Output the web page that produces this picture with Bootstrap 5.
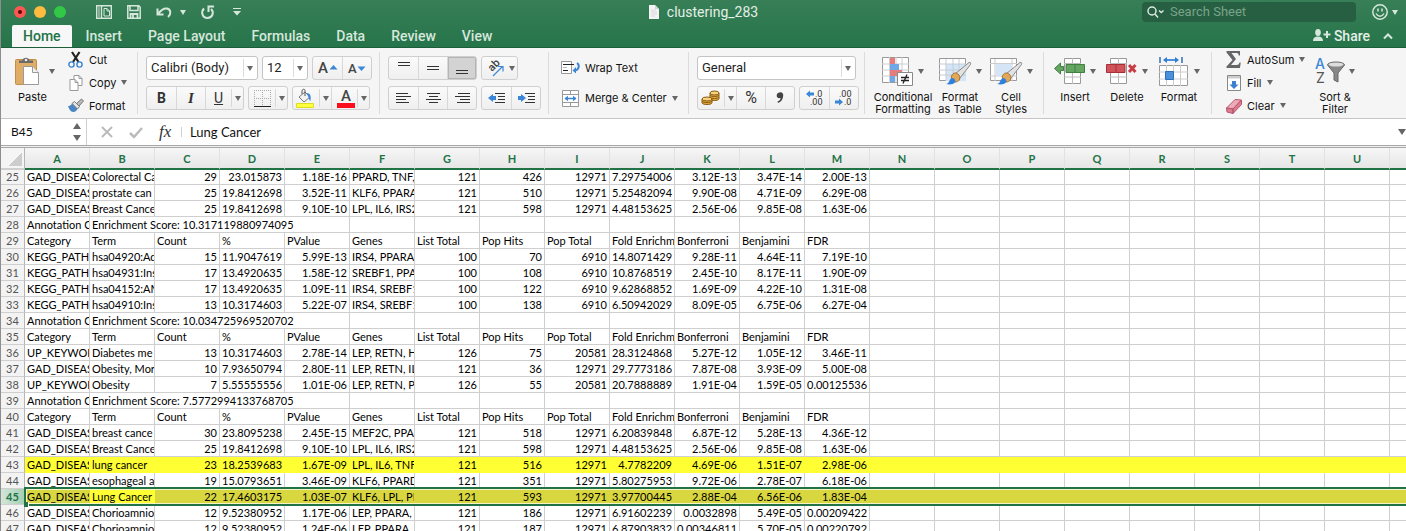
<!DOCTYPE html>
<html lang="en">
<head>
<meta charset="utf-8">
<meta name="viewport" content="width=device-width, initial-scale=1">
<title>clustering_283</title>
<link href="https://cdn.jsdelivr.net/npm/bootstrap@5.3.0/dist/css/bootstrap.min.css" rel="stylesheet">
<style>
  :root { --ui: Roboto, "Liberation Sans", sans-serif; --label: Inter, Roboto, sans-serif; --cell: Lato, "Liberation Sans", sans-serif; --xl: #217346; }
  body { font-family: var(--ui); font-size: 12px; line-height: 14px; color: #111; height: 100vh; overflow: hidden; }
  .app-window { height: 100vh; overflow: hidden; border-left: 1px solid #8d8d8d; }
  button { border: 0; background: none; padding: 0; color: inherit; font: inherit; }
  svg { display: block; flex: none; overflow: visible; }

  /* green title area */
  .app-head { background: linear-gradient(#387f57, #26744a); border-bottom: 1px solid #1b5f3a; color: #e4efe8; }
  .title-row { display: grid; grid-template-columns: 1fr auto 1fr; height: 24px; align-items: center; }
  .lights { padding-left: 13px; margin-right: 30px; }
  .light { width: 12px; height: 12px; border-radius: 50%; }
  .quick { gap: 15px; }
  .doc-title { font-size: 14px; }
  .find-box { width: 214px; height: 20px; background: #265f41; border-radius: 4px; }
  .find-box input { background: none; border: 0; outline: 0; color: #fff; font-size: 13px; width: 150px; padding: 0; line-height: 16px; }
  .find-box input::placeholder { color: #7ba38c; opacity: 1; }
  .tabs-row { height: 23px; padding-left: 11px; }
  .tab-btn { font-size: 14px; font-weight: 500; padding: 0 13px; height: 22px; color: #d6e7dc; }
  .tab-btn.active { background: #f7f7f7; color: var(--xl); border-radius: 2px 2px 0 0; padding: 0 11px; margin-right: 1px; }
  .share-box { gap: 13px; padding-right: 13px; }
  .share-btn { font-size: 14px; font-weight: 500; }

  .tri { width: 0; height: 0; border: 3px solid transparent; border-top: 5px solid #666; border-bottom: 0; flex: none; }
  .tri.pale { border-top-color: #d6e7dc; }
  .tri.big { border-width: 6px 4px 0; }
  .tri.big.up { border: solid transparent; border-width: 0 4px 6px; border-bottom-color: #666; }

  /* ribbon */
  .ribbon { background: #f5f5f5; height: 70px; }
  .ribbon .vr { margin: 4px 0; background: #dcdcdc; opacity: 1; flex: none; width: 1px; min-height: 0; }
  .grp { flex: none; height: 70px; }
  .g-clip { width: 136px; } .g-font { width: 241px; } .g-align { width: 168px; } .g-wrap { width: 139px; }
  .g-num { width: 175px; } .g-style { width: 178px; padding-left: 9px; } .g-cells { width: 167px; padding-left: 5px; } .g-edit { padding-left: 14px; }
  .stack { padding: 8px 0 0 8px; display: flex; flex-direction: column; gap: 6px; }
  .g-wrap.stack { padding-left: 12px; }
  .rowline { display: flex; gap: 4px; }
  .seg { display: flex; height: 24px; border: 1px solid #cfcfcf; border-radius: 3px; background: linear-gradient(#fafafa, #efefef); color: #333; }
  .seg > button { width: 29px; display: flex; align-items: center; justify-content: center; }
  .seg > button + button { border-left: 1px solid #d8d8d8; }
  .seg > button.wide { width: 38px; padding: 0 2px 0 5px; justify-content: space-between; }
  .seg > button.on { background: #d3d3d3; box-shadow: inset 0 0 0 1px #b4b4b4; border-radius: 0 2px 2px 0; }
  .seg .cut { border-left: 1px solid #d8d8d8; align-self: stretch; margin: 2px 0; padding-left: 3px; display: flex; align-items: center; }
  .pick { height: 24px; border: 1px solid #c4c4c4; border-radius: 3px; font-size: 13px; line-height: 16px; padding: 0 0 0 4px; color: #222; appearance: none;
    background: #fff url("data:image/svg+xml,%3Csvg xmlns='http://www.w3.org/2000/svg' width='14' height='18'%3E%3Cpath d='M.5 0v18' stroke='%23dcdcdc'/%3E%3Cpath d='M4 7h6l-3 5z' fill='%23666'/%3E%3C/svg%3E") no-repeat right center; }
  .side-btn { height: 23px; display: flex; align-items: center; gap: 5px; white-space: nowrap; font: 11px/14px var(--label); }
  .side-btn svg { width: 16px; }
  .g-wrap .side-btn { height: 24px; }
  .g-wrap .side-btn svg { width: 19px; }
  .big-btn { display: flex; flex-direction: column; align-items: center; font: 11px/12px var(--label); padding-top: 7px; }
  .pic { display: flex; height: 32px; align-items: center; gap: 5px; margin-bottom: 4px; }

  /* formula bar */
  .fbar { height: 27px; border-top: 1px solid #c6c6c6; background: #fff; font-family: var(--cell); }
  .fbar input { border: 0; outline: 0; padding: 0; font: 13px/16px var(--cell); color: #111; }
  .fbar input.name-in { width: 62px; margin-left: 10px; font-size: 12px; }
  .fbar .vr { background: #cfcfcf; opacity: 1; min-height: 0; }
  .steps { gap: 6px; margin-right: 5px; }
  .f-acts { gap: 16px; margin-left: 14px; }
  .fx-mark { font: italic 17px/20px "Liberation Serif", serif; width: 22px; color: #333; }
  .split { height: 3px; border-top: 1px solid #a9a7a9; border-bottom: 1px solid #a9a7a9; background: #efefef; }

  /* sheet */
  .sheet { table-layout: fixed; border-collapse: separate; border-spacing: 0; width: 1454px; font: 11px/15px var(--cell); color: #000; }
  .sheet col { width: 65px; } .sheet col:first-child { width: 24px; }
  .sheet th, .sheet td { height: 16px; padding: 0 2px; border-right: 1px solid #cfcfcf; border-bottom: 1px solid #cfcfcf; overflow: hidden; white-space: nowrap; background: #fff; }
  .sheet td.n { text-align: right; }
  .sheet thead th { height: 22px; line-height: 19px; background: linear-gradient(#f6f6f6, #e6e6e6); border-bottom: 2px solid var(--xl); border-right-color: #e2e2e2; color: var(--xl); text-align: center; font-weight: 700; }
  .sheet thead th:first-child { background: linear-gradient(135deg, transparent 50%, #cdcdcd 50%) 7px 5px / 14px 13px no-repeat #f5f5f5; border-bottom: 2px solid #cfcfcf; border-right-color: #b5b5b5; }
  .sheet tbody th { background: #f3f3f3; color: #555; font-weight: 400; text-align: center; border-right-color: #b5b5b5; }
  .sheet tbody tr:first-child th, .sheet tbody tr:first-child td { height: 15px; line-height: 14px; }
  .sheet .hot td { background: #ffff33; border-color: #ffff33; }
  .sheet .picked td { background: #d9d740; border-color: #d9d740; }
  .sheet .picked td.cur { background: #ffff33; border-color: #ffff33; }
  .sheet .picked th { background: linear-gradient(90deg, #d3e6da, #a5cfb3); color: var(--xl); font-weight: 700; position: relative; overflow: visible; }
  .sheet .picked th::after { content: ""; position: absolute; left: 100%; width: 100vw; top: -2px; bottom: -2px; border: 2px solid var(--xl); box-shadow: inset 0 0 0 1px #f4f4c8; }
  .sheet .picked th::before { content: ""; position: absolute; left: 100%; bottom: -3px; width: 5px; height: 5px; background: var(--xl); border-right: 1px solid #fff; z-index: 1; }
</style>
</head>
<body>
<div class="app-window">
  <header class="app-head">
    <div class="title-row">
      <div class="d-flex align-items-center">
        <div class="d-flex gap-2 lights">
          <span class="light" style="background:#fc5753"><svg width="12" height="12"><circle cx="6" cy="6" r="2" fill="#5a0805"/></svg></span>
          <span class="light" style="background:#fdbc40"></span>
          <span class="light" style="background:#33c748"></span>
        </div>
        <div class="d-flex align-items-center quick">
        <button aria-label="Sidebar"><svg width="16" height="14" viewBox="0 0 16 14" fill="none" stroke="#d6e7dc"><path d="M.7.7h14.600v12.600H.7zM5.500 1v12" stroke-width="1.400"/><path d="M2 3h2M2 5h2M2 7h2M2 9h2M2 11h2"/><path d="M8 3.500h3l2.500 2.500v5H8zM11 3.500V6h2.500"/></svg></button>
        <button aria-label="Save"><svg width="14" height="14" viewBox="0 0 14 14" fill="none" stroke="#d6e7dc" stroke-width="1.500"><path d="M.8.8h11l1.400 1.400v11H.8zM3 1v4.500h8V1"/><path d="M3.500 13V9h7v4M6 10v3" stroke-width="1.800"/></svg></button>
        <button class="d-flex align-items-center gap-2" aria-label="Undo"><svg width="16" height="13" viewBox="0 0 16 13" fill="none" stroke="#d6e7dc" stroke-width="2"><path d="M1.500 2.500v6h6M2 8C5 4 8 2 11 2.500c4 1 4.500 5.500 1 8.500"/></svg><span class="tri pale"></span></button>
        <button aria-label="Redo"><svg width="13" height="14" viewBox="0 0 13 14" fill="none" stroke="#d6e7dc" stroke-width="2"><path d="M3 3.500C-.5 7 1.500 13 6.500 13S13.500 7 10 4M7.500 7V1.500H13"/></svg></button>
        <button class="ms-1" aria-label="Customize toolbar"><svg width="8" height="8" fill="#d6e7dc"><path d="M0 0h8v1H0zM0 3h8L4 7.500z"/></svg></button>
        </div>
      </div>
      <div class="d-flex align-items-center gap-2 doc-title">
        <svg width="10" height="14" viewBox="0 0 10 14"><path d="M0 0h6l4 4v10H0z" fill="#f4f4f4"/><path d="M6 0v4h4z" fill="#c9d6ce"/><path d="M2 5h5M2 7h6M2 9h6M2 11h4" stroke="#d8d8d8"/></svg>clustering_283
      </div>
      <div class="d-flex align-items-center justify-content-end gap-3 pe-2">
        <label class="find-box d-flex align-items-center"><svg class="mx-1" width="20" height="12" viewBox="0 0 20 12" fill="none" stroke="#dbe8e0" stroke-width="1.500"><circle cx="6" cy="5" r="4"/><path d="M9 8l3 3.500M13 4.500l2.200 2L17.500 4.500"/></svg><input type="text" placeholder="Search Sheet" aria-label="Search Sheet"></label>
        <button class="d-flex align-items-center gap-1" aria-label="Feedback"><svg width="16" height="16" fill="none" stroke="#d6e7dc" stroke-width="1.500"><circle cx="8" cy="8" r="7.200"/><path d="M6 4.500v3M10 4.500v3M4 9.500c2 3.500 6 3.500 8 0"/></svg><span class="tri pale"></span></button>
      </div>
    </div>
    <nav class="tabs-row d-flex align-items-end" aria-label="Ribbon tabs">
      <button class="tab-btn active">Home</button><button class="tab-btn">Insert</button><button class="tab-btn">Page Layout</button><button class="tab-btn">Formulas</button><button class="tab-btn">Data</button><button class="tab-btn">Review</button><button class="tab-btn">View</button>
      <div class="ms-auto d-flex align-items-center align-self-center share-box">
        <button class="share-btn d-flex align-items-center gap-1"><svg width="17" height="13" viewBox="0 0 17 13" fill="#d6e7dc"><ellipse cx="5" cy="3.500" rx="2.800" ry="3.500"/><path d="M0 12c0-3 1.500-4.500 5-4.500S10 9 10 12z"/><path d="M13 2h2v2.500h2.500v2H15V9h-2V6.500h-2.500v-2H13z"/></svg>Share</button>
        <button aria-label="Collapse ribbon"><svg width="10" height="6" fill="none" stroke="#d6e7dc" stroke-width="2"><path d="M1 5.500l4-4 4 4"/></svg></button>
      </div>
    </nav>
  </header>

  <div class="ribbon d-flex">
    <div class="grp g-clip d-flex">
      <button class="big-btn" style="width:63px"><span class="pic ps-1"><svg width="25" height="30" viewBox="0 0 25 30"><rect x=".5" y="3.500" width="21" height="25" rx="1" fill="#e0ad68" stroke="#c48f49"/><path d="M4 7V4.500h3.500C7.500 1 14 .5 14.500 4.500H18V7z" fill="#6b6b6b"/><circle cx="11" cy="4" r="1.300" fill="#eee"/><path d="M8.500 10.500h9l6 6v12h-15z" fill="#fff" stroke="#9a9a9a"/><path d="M17.500 10.500v6h6" fill="#f2f2f2" stroke="#9a9a9a"/></svg><span class="tri ms-1"></span></span>Paste</button>
      <div class="ms-1 d-flex flex-column">
        <button class="side-btn"><svg width="16" height="16" viewBox="0 0 16 16" fill="none"><path d="M4 0l6.500 10M11.500 0L5 10" stroke="#222" stroke-width="2.200"/><circle cx="3.500" cy="12.500" r="2.600" stroke="#3a82d0" stroke-width="1.400"/><circle cx="11.500" cy="12.500" r="2.600" stroke="#3a82d0" stroke-width="1.400"/></svg>Cut</button>
        <button class="side-btn"><svg width="15" height="16" viewBox="0 0 15 16" fill="#fff" stroke="#999"><path d="M5.500.5h5l3 3v7h-8z"/><path d="M1.500 4.500h5l3 3v8h-8z"/><path d="M6.500 4.500v3h3M10.500.5v3h3" fill="none"/></svg>Copy<span class="tri"></span></button>
        <button class="side-btn"><svg width="16" height="14" viewBox="0 0 16 14"><path d="M0 7c3 0 3-2 5-3l5 5c-1 2-2 4-5 4-2 0-4-3-5-6z" fill="#4a86c5"/><path d="M4 4.500l2.500-2 5 5-2 2.500z" fill="#e5e5e5" stroke="#777"/><path d="M8.500 4.500L13.500 0l2 2-4.500 5z" fill="#bbb" stroke="#777"/></svg>Format</button>
      </div>
    </div>
    <div class="vr"></div>

    <div class="grp g-font stack">
      <div class="rowline">
        <select class="pick" style="width:112px" aria-label="Font"><option>Calibri (Body)</option></select>
        <select class="pick" style="width:46px" aria-label="Font size"><option>12</option></select>
        <div class="seg"><button aria-label="Grow font"><svg width="20" height="14"><text x="0" y="12" font-size="15" font-weight="500" fill="#444">A</text><path d="M11.500 8.500h8L15.500 4z" fill="#3b86d6"/></svg></button><button aria-label="Shrink font"><svg width="18" height="14"><text x="0" y="12" font-size="13" font-weight="500" fill="#444">A</text><path d="M9.500 5.500h8l-4 4.500z" fill="#3b86d6"/></svg></button></div>
      </div>
      <div class="rowline">
        <div class="seg"><button class="fw-bold" style="font-size:14px">B</button><button style="font:italic bold 15px 'Liberation Serif',serif">I</button><button class="wide ps-2" aria-label="Underline"><u style="font-size:14px">U</u><span class="cut"><span class="tri"></span></span></button></div>
        <div class="seg"><button class="wide" aria-label="Borders"><svg width="17" height="17" fill="none" stroke="#aaa"><path d="M.5 0v16M8.500 0v16M16.500 0v16M0 .5h17M0 8.500h17" stroke-dasharray="1 1"/><path d="M0 16.500h17" stroke="#222"/></svg><span class="cut"><span class="tri"></span></span></button></div>
        <div class="seg"><button class="wide" style="padding-left:3px" aria-label="Fill colour"><svg width="18" height="19"><path d="M3 8l6-5 5 5-6 5z" fill="#f2f2f2" stroke="#777"/><path d="M9 7V1.500C9-.5 6 0 6 2v3" fill="none" stroke="#555"/><path d="M10 4c5 0 5 3 4.500 8-2-1-1-4-4.500-8z" fill="#3b86d6"/><path d="M.5 14.500h17v4H.5z" fill="#ffff3c" stroke="#dede20"/></svg><span class="cut"><span class="tri"></span></span></button><button class="wide" aria-label="Font colour"><svg width="18" height="19"><text x="4" y="12" font-size="15" font-weight="500" fill="#444">A</text><path d="M0 14h18v5H0z" fill="#fc0d1b"/></svg><span class="cut"><span class="tri"></span></span></button></div>
      </div>
    </div>
    <div class="vr"></div>

    <div class="grp g-align stack">
      <div class="rowline">
        <div class="seg"><button aria-label="Align top"><svg width="12" height="16" stroke="#333"><path d="M0 2.500h12M0 5.500h12"/></svg></button><button aria-label="Align middle"><svg width="12" height="16" stroke="#333"><path d="M0 6.500h12M0 9.500h12"/></svg></button><button class="on" aria-label="Align bottom"><svg width="12" height="16" stroke="#333"><path d="M0 10.500h12M0 13.500h12"/></svg></button></div>
        <div class="seg"><button class="wide" style="width:35px" aria-label="Orientation"><svg width="18" height="18"><text transform="translate(5 13) rotate(-45)" font-size="11" font-weight="500" fill="#444">ab</text><path d="M6 17l9-9M11 7.500h5v5" fill="none" stroke="#3b86d6" stroke-width="1.200"/></svg><span class="tri"></span></button></div>
      </div>
      <div class="rowline">
        <div class="seg"><button aria-label="Align left"><svg width="15" height="12" stroke="#333"><path d="M0 1.500h12M0 4.500h15M0 7.500h10M0 10.500h13"/></svg></button><button aria-label="Centre"><svg width="15" height="12" stroke="#333"><path d="M1 1.500h13M3 4.500h9M0 7.500h15M3 10.500h9"/></svg></button><button aria-label="Align right"><svg width="15" height="12" stroke="#333"><path d="M3 1.500h12M0 4.500h15M5 7.500h10M2 10.500h13"/></svg></button></div>
        <div class="seg"><button aria-label="Decrease indent"><svg width="17" height="12" stroke="#333"><path d="M7 1.500h10M10 4.500h7M10 7.500h7M7 10.500h10"/><path d="M0 6l5-4v2h3v4H5v2z" fill="#3b86d6" stroke="none"/></svg></button><button aria-label="Increase indent"><svg width="17" height="12" stroke="#333"><path d="M7 1.500h10M10 4.500h7M10 7.500h7M7 10.500h10"/><path d="M8 6L3 2v2H0v4h3v2z" fill="#3b86d6" stroke="none"/></svg></button></div>
      </div>
    </div>
    <div class="vr"></div>

    <div class="grp g-wrap stack">
      <button class="side-btn"><svg height="14" viewBox="0 0 19 14" fill="none"><path d="M.5.5h10v12H.5z" fill="#fff" stroke="#999"/><path d="M2 6.500h4" stroke="#bbb"/><path d="M2 3.500h11M2 9.500h5" stroke="#222"/><path d="M16 2c3 2 2 7-2 7.500" stroke="#3b86d6" stroke-width="2"/><path d="M11.500 9.500L15 6v6.500z" fill="#3b86d6"/></svg>Wrap Text</button>
      <button class="side-btn"><svg height="17" viewBox="0 0 19 17" fill="#fff" stroke="#999"><path d="M1.500.500h16v16h-16z"/><path d="M1.500 4.500h16M1.500 12.500h16M9.500.5v4M9.500 12.500v4"/><path d="M4 8.500h11" stroke="#3b86d6" stroke-width="1.500"/><path d="M3.500 8.500L7 5.800v5.400zM15.500 8.500L12 5.800v5.400z" fill="#3b86d6" stroke="none"/></svg>Merge &amp; Center<span class="tri"></span></button>
    </div>
    <div class="vr"></div>

    <div class="grp g-num stack">
      <div class="rowline"><select class="pick" style="width:159px" aria-label="Number format"><option>General</option></select></div>
      <div class="rowline">
        <div class="seg"><button class="wide" style="padding-left:3px" aria-label="Currency"><svg width="19" height="16" viewBox="0 0 19 16" fill="#e3ab3c" stroke="#8a5a14"><path d="M9 3v6c1 2 8 2 9 0V3z"/><ellipse cx="13.500" cy="3" rx="4.500" ry="2" fill="#f6d37a"/><path d="M9 5c1 2 8 2 9 0M9 7c1 2 8 2 9 0" fill="none"/><path d="M1 9v4c1 2 9 2 10 0V9z"/><ellipse cx="6" cy="9" rx="5" ry="2" fill="#f6d37a"/><path d="M1 11c1 2 9 2 10 0" fill="none"/></svg><span class="cut"><span class="tri"></span></span></button><button style="font-size:16px">%</button><button aria-label="Comma style"><svg width="8" height="12"><path d="M2 1c4-2 6 1 5 4-.5 3-2 5-5 6l-.5-1.500C4 8.500 4.500 7.500 4.500 6 0 7 0 2 2 1z" fill="#444"/></svg></button></div>
        <div class="seg"><button aria-label="Increase decimal"><svg width="18" height="17" font-size="9" fill="#333"><text x="9" y="7">.0</text><text x="4" y="15">.00</text><path d="M0 4l4-3.500v2h4v3H4v2z" fill="#3b86d6"/></svg></button><button aria-label="Decrease decimal"><svg width="18" height="17" font-size="9" fill="#333"><text x="4" y="7">.00</text><text x="9" y="15">.0</text><path d="M8 12L4 8.500v2H0v3h4v2z" fill="#3b86d6"/></svg></button></div>
      </div>
    </div>
    <div class="vr"></div>

    <div class="grp g-style d-flex">
      <button class="big-btn" style="width:58px"><span class="pic"><svg width="31" height="29" viewBox="0 0 31 29"><path d="M.5.500h26v25H.5z" fill="#fff" stroke="#999"/><path d="M0 7h27M0 13h27M0 19h27M7.500 0v26M14 0v26M20 0v26" stroke="#ccc"/><path d="M8 1h5v6H8zM8 13h12v6H8z" fill="#e67c7c"/><path d="M8 7h9v6H8zM8 19h5v6H8z" fill="#6fa8e6"/><path d="M15.500 15.500h15v13h-15z" fill="#fff" stroke="#888"/><path d="M19 20.500h8M19 23.500h8M25 17.500l-4 9" stroke="#222" stroke-width="1.300"/></svg><span class="tri"></span></span>Conditional<br>Formatting</button>
      <button class="big-btn" style="width:56px"><span class="pic"><svg width="32" height="28" viewBox="0 0 32 28"><path d="M.5 1.500h26v22H.5z" fill="#fff" stroke="#999"/><path d="M7 7h20v17H7z" fill="#d3e5f7"/><path d="M0 7h27M0 13h27M0 18h27M7 2v22M14 2v22M20 2v22" stroke="#c4ccd4"/><use href="#brush"/></svg><span class="tri"></span></span>Format<br>as Table</button>
      <button class="big-btn" style="width:46px"><span class="pic"><svg width="32" height="28" viewBox="0 0 32 28"><path d="M.5 1.500h26v22H.5z" fill="#fff" stroke="#999"/><path d="M0 6.500h27M0 19h27M5 2v22M22 2v22" stroke="#ccc"/><path d="M6 7h16v12H6z" fill="#d3e5f7"/><g id="brush"><path d="M16 17L30 5.500c1.500-.5 2 .5 1.500 2L21 21z" fill="#e2e2e2" stroke="#888"/><path d="M12 20c2-5 5-5 8-2 2 4 0 7-4 7z" fill="#e2a85a" stroke="#a8742e"/><path d="M7 27c3 0 3-4 5.500-6 3 0 4 2 4 4-2 2.500-6 3-9.500 2z" fill="#2f80dc"/></g></svg><span class="tri"></span></span>Cell<br>Styles</button>
    </div>
    <div class="vr"></div>

    <div class="grp g-cells d-flex">
      <button class="big-btn" style="width:52px"><span class="pic"><svg width="31" height="26" viewBox="0 0 31 26"><path d="M10.500.5h16v25h-16z" fill="#fff" stroke="#999"/><path d="M10 5.500h17M10 19h17M18.500 0v26" stroke="#bbb"/><path d="M12 6.500h18.500v8H12z" fill="#65a562" stroke="#3f8040"/><path d="M21 7v7" stroke="#3f8040"/><path d="M.5 10.500L6.500 5v3.500h3v4h-3V16z" fill="#65a562" stroke="#3f8040"/></svg><span class="tri"></span></span>Insert</button>
      <button class="big-btn" style="width:52px"><span class="pic"><svg width="31" height="26" viewBox="0 0 31 26"><path d="M4.500.5h16v25h-16z" fill="#fff" stroke="#999"/><path d="M4 5.500h17M4 19h17M12.500 0v26" stroke="#bbb"/><path d="M.5 6.500H19v8H.5z" fill="#d0535a" stroke="#a82f36"/><path d="M10 7v7" stroke="#a82f36"/><path d="M23 7l6.500 7M29.500 7L23 14" stroke="#c83c44" stroke-width="3"/></svg><span class="tri"></span></span>Delete</button>
      <button class="big-btn" style="width:52px"><span class="pic"><svg width="30" height="30" viewBox="0 0 30 30"><path d="M.5 9.500h28v20H.5z" fill="#fff" stroke="#999"/><path d="M0 16h29M0 23h29M7.500 9v21M14.500 9v21M21.500 9v21" stroke="#ccc"/><path d="M6.500 15.500h8v8h-8z" fill="#4a90dc" stroke="#2f6fb5"/><path d="M1 1v6M23 1v6" stroke="#2f6fb5" stroke-width="1.500"/><path d="M7 4h10" stroke="#4a90dc" stroke-width="2"/><path d="M4 4l4-3v6zM20 4l-4-3v6z" fill="#2f7fd0"/></svg><span class="tri"></span></span>Format</button>
    </div>
    <div class="vr"></div>

    <div class="grp g-edit d-flex">
      <div style="width:88px">
        <button class="side-btn"><svg width="15" height="17" viewBox="0 0 15 17"><path d="M0 0h13.500v4.500h-1.200c-.3-2-1-2.500-3-2.500H5l4.500 6L4.500 14H10c2 0 2.500-.8 3-2.500h1.200L13.500 17H0v-1.500L6 9 0 1.500z" fill="#666"/></svg>AutoSum<span class="tri"></span></button>
        <button class="side-btn"><svg width="14" height="16" viewBox="0 0 14 16"><path d="M.5.500h13v15H.5z" fill="#fff" stroke="#888"/><path d="M1 1h12v2.500H1z" fill="#ccc"/><path d="M5 6h4v3.500h2.500L7 14 2.500 9.500H5z" fill="#3b7fd0"/></svg>Fill<span class="tri"></span></button>
        <button class="side-btn"><svg width="16" height="16" viewBox="0 0 16 16" stroke="#b5566c"><path d="M.5 10L9 1.500l6.500.500L7 11z" fill="#f0a9b8"/><path d="M.5 10L7 11v4.500L1 14zM7 11l8.500-9v4.500l-8.500 9z" fill="#dd7b90"/></svg>Clear<span class="tri"></span></button>
      </div>
      <button class="big-btn" style="width:42px"><span class="pic gap-1"><svg width="30" height="28" viewBox="0 0 30 28"><text x="0" y="12" font-size="14" font-weight="500" fill="#3b86d6">A</text><text x="1" y="26" font-size="14" fill="#555">Z</text><path d="M12.500 8c0-4 17-4 17 0l-6.500 8v9l-4-2v-7z" fill="#888" stroke="#666"/><ellipse cx="21" cy="7.500" rx="7.500" ry="2" fill="#ddd"/></svg><span class="tri"></span></span>Sort &amp;<br>Filter</button>
    </div>
  </div>

  <div class="fbar d-flex align-items-center">
    <input class="name-in" value="B45" aria-label="Name box">
    <div class="d-flex flex-column steps"><span class="tri big up"></span><span class="tri big"></span></div>
    <div class="vr"></div>
    <div class="d-flex align-items-center f-acts">
      <button aria-label="Cancel"><svg width="12" height="12" stroke="#bbb" stroke-width="2"><path d="M1 1l10 10M11 1L1 11"/></svg></button>
      <button aria-label="Enter"><svg width="14" height="11" fill="none" stroke="#bbb" stroke-width="2.500"><path d="M1 6l4 4 8-9"/></svg></button>
      <span class="fx-mark">fx</span>
    </div>
    <div class="vr my-2"></div>
    <input class="ms-2 flex-grow-1" value="Lung Cancer" aria-label="Formula">
    <button aria-label="Expand formula bar"><span class="tri big d-block"></span></button>
  </div>
  <div class="split"></div>

  <table class="sheet">
    <colgroup id="cols"></colgroup>
    <thead><tr id="heads"></tr></thead>
    <tbody id="cells"></tbody>
  </table>
</div>

<script>
const fields = "Category|Term|Count|%|PValue|Genes|List Total|Pop Hits|Pop Total|Fold Enrichm|Bonferroni|Benjamini|FDR";
const rows = [
"GAD_DISEAS|Colorectal Ca|29|23.015873|1.18E-16|PPARD, TNF,|121|426|12971|7.29754006|3.12E-13|3.47E-14|2.00E-13",
"GAD_DISEAS|prostate can|25|19.8412698|3.52E-11|KLF6, PPARA|121|510|12971|5.25482094|9.90E-08|4.71E-09|6.29E-08",
"GAD_DISEAS|Breast Cance|25|19.8412698|9.10E-10|LPL, IL6, IRS2|121|598|12971|4.48153625|2.56E-06|9.85E-08|1.63E-06",
"Annotation C|Enrichment Score: 10.317119880974095",
fields,
"KEGG_PATHW|hsa04920:Ad|15|11.9047619|5.99E-13|IRS4, PPARA,|100|70|6910|14.8071429|9.28E-11|4.64E-11|7.19E-10",
"KEGG_PATHW|hsa04931:Ins|17|13.4920635|1.58E-12|SREBF1, PPA|100|108|6910|10.8768519|2.45E-10|8.17E-11|1.90E-09",
"KEGG_PATHW|hsa04152:AM|17|13.4920635|1.09E-11|IRS4, SREBF1|100|122|6910|9.62868852|1.69E-09|4.22E-10|1.31E-08",
"KEGG_PATHW|hsa04910:Ins|13|10.3174603|5.22E-07|IRS4, SREBF1|100|138|6910|6.50942029|8.09E-05|6.75E-06|6.27E-04",
"Annotation C|Enrichment Score: 10.034725969520702",
fields,
"UP_KEYWOR|Diabetes me|13|10.3174603|2.78E-14|LEP, RETN, H|126|75|20581|28.3124868|5.27E-12|1.05E-12|3.46E-11",
"GAD_DISEAS|Obesity, Mor|10|7.93650794|2.80E-11|LEP, RETN, IL|121|36|12971|29.7773186|7.87E-08|3.93E-09|5.00E-08",
"UP_KEYWOR|Obesity|7|5.55555556|1.01E-06|LEP, RETN, P|126|55|20581|20.7888889|1.91E-04|1.59E-05|0.00125536",
"Annotation C|Enrichment Score: 7.5772994133768705",
fields,
"GAD_DISEAS|breast cance|30|23.8095238|2.45E-15|MEF2C, PPAR|121|518|12971|6.20839848|6.87E-12|5.28E-13|4.36E-12",
"GAD_DISEAS|Breast Cance|25|19.8412698|9.10E-10|LPL, IL6, IRS2|121|598|12971|4.48153625|2.56E-06|9.85E-08|1.63E-06",
"GAD_DISEAS|lung cancer|23|18.2539683|1.67E-09|LPL, IL6, TNF,|121|516|12971|4.7782209|4.69E-06|1.51E-07|2.98E-06",
"GAD_DISEAS|esophageal a|19|15.0793651|3.46E-09|KLF6, PPARD|121|351|12971|5.80275953|9.72E-06|2.78E-07|6.18E-06",
"GAD_DISEAS|Lung Cancer|22|17.4603175|1.03E-07|KLF6, LPL, PP|121|593|12971|3.97700445|2.88E-04|6.56E-06|1.83E-04",
"GAD_DISEAS|Chorioamnio|12|9.52380952|1.17E-06|LEP, PPARA,|121|186|12971|6.91602239|0.0032898|5.49E-05|0.00209422",
"GAD_DISEAS|Chorioamnio|12|9.52380952|1.24E-06|LEP, PPARA,|121|187|12971|6.87903832|0.00346811|5.70E-05|0.00220792"];
const letters = "ABCDEFGHIJKLMNOPQRSTU".split("").concat("");
document.getElementById("cols").innerHTML = "<col>".repeat(23);
document.getElementById("heads").innerHTML = "<th></th>" + letters.map(l => `<th scope="col">${l}</th>`).join("");
document.getElementById("cells").innerHTML = rows.map((line, i) => {
  const vals = line.split("|"), no = 25 + i;
  let html = "", used = 0;
  vals.forEach((v, c) => {
    const span = vals.length === 2 && c === 1 ? 4 : 1;
    used += span;
    const cls = [/^[\d.]+(E-\d+)?$/.test(v) ? "n" : "", no === 45 && c === 1 ? "cur" : ""].join(" ").trim();
    html += `<td class="${cls}" colspan="${span}">${v}</td>`;
  });
  html += "<td></td>".repeat(22 - used);
  return `<tr class="${no === 43 ? "hot" : no === 45 ? "picked" : ""}"><th scope="row">${no}</th>${html}</tr>`;
}).join("");
</script>
<script src="https://cdn.jsdelivr.net/npm/bootstrap@5.3.0/dist/js/bootstrap.bundle.min.js"></script>
</body>
</html>
